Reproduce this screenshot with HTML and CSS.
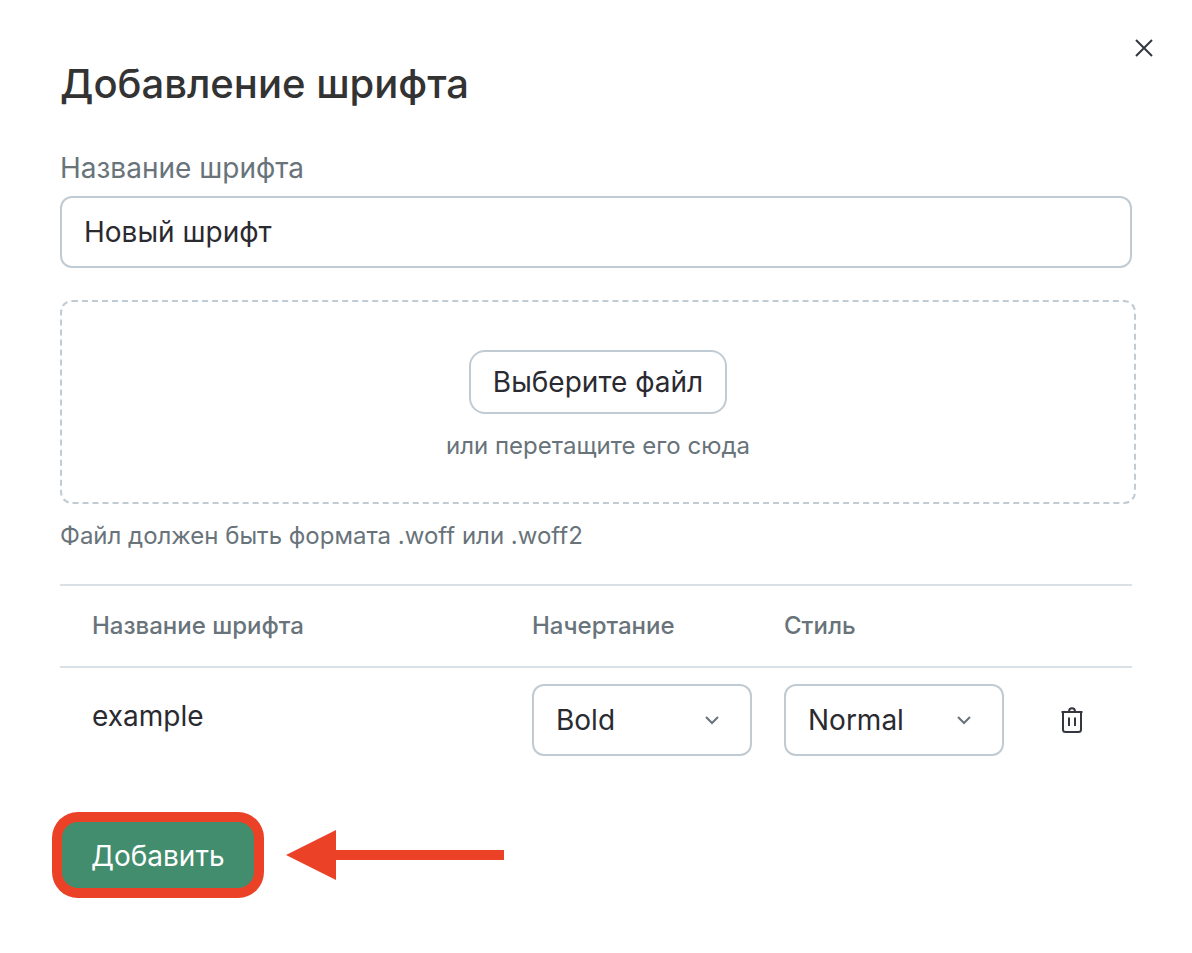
FILE: index.html
```
<!DOCTYPE html>
<html lang="ru">
<head>
    <meta charset="UTF-8">
    <meta name="viewport" content="width=device-width, initial-scale=1.0">
    <title>Добавление шрифта</title>
    <link rel="stylesheet" href="styles.css">
</head>
<body>
    <form class="modal">
        <button class="close" type="button" aria-label="Закрыть">
            <svg width="20" height="20" viewBox="0 0 20 20"><path d="M2 2l16 16M18 2L2 18"/></svg>
        </button>
        <h1 class="title">Добавление шрифта</h1>
        <label class="label" for="font-name">Название шрифта</label>
        <input class="input" id="font-name" type="text" value="Новый шрифт">

        <div class="dropzone">
            <button class="btn-file" type="button">Выберите файл</button>
            <span class="drop-text">или перетащите его сюда</span>
        </div>
        <p class="note">Файл должен быть формата .woff или .woff2</p>

        <table class="fonts">
            <thead>
                <tr>
                    <th class="col-name">Название шрифта</th>
                    <th class="col-select">Начертание</th>
                    <th class="col-select">Стиль</th>
                    <th class="col-del"></th>
                </tr>
            </thead>
            <tbody>
                <tr>
                    <td class="col-name">example</td>
                    <td class="col-select">
                        <div class="select">
                            <select aria-label="Начертание">
                                <option>Regular</option>
                                <option selected>Bold</option>
                            </select>
                            <svg width="16" height="16" viewBox="0 0 16 16"><path d="M2 5l6 6 6-6"/></svg>
                        </div>
                    </td>
                    <td class="col-select">
                        <div class="select">
                            <select aria-label="Стиль">
                                <option selected>Normal</option>
                                <option>Italic</option>
                            </select>
                            <svg width="16" height="16" viewBox="0 0 16 16"><path d="M2 5l6 6 6-6"/></svg>
                        </div>
                    </td>
                    <td class="col-del">
                        <button class="btn-del" type="button" aria-label="Удалить">
                            <svg width="24" height="28" viewBox="0 0 24 28"><path d="M1.5 6h21M3 6v17.500q0 2.500 2.500 2.500h13q2.500 0 2.500-2.500V6M9 5.500c0-4.500 6-4.500 6 0M9 11.500v8.500M15 11.500v8.500"/></svg>
                        </button>
                    </td>
                </tr>
            </tbody>
        </table>

        <div class="actions">
            <button class="btn-add" type="submit">Добавить</button>
            <svg class="arrow" width="218" height="50" viewBox="0 0 218 50"><path d="M0 25L50 0v20h168v10H50v20z"/></svg>
        </div>
    </form>
</body>
</html>
```
FILE: styles.css
```
*{
    margin: 0;
    padding: 0;
    box-sizing: border-box;
}
body{
    background: #ffffff;
    font-family: Inter, "Liberation Sans", sans-serif;
    font-size: 28px;
    line-height: 40px;
    color: #2a2a30;
}
button,input,select{
    font: inherit;
    color: inherit;
    background: none;
    border: none;
}
button,select{
    cursor: pointer;
}
svg{
    display: block;
    fill: none;
    stroke: #34373d;
    stroke-width: 2;
}
.modal{
    position: relative;
    padding: 60px;
}
.close{
    position: absolute;
    top: 28px;
    right: 28px;
    padding: 10px;
}
.title{
    font-size: 40px;
    line-height: 48px;
    font-weight: 500;
    color: #333333;
    margin-bottom: 40px;
}
.label{
    display: block;
    color: #68737a;
    margin-bottom: 8px;
}
.input{
    display: block;
    width: 100%;
    height: 72px;
    padding: 0 22px;
    border: 2px solid #c0cbd3;
    border-radius: 12px;
}
.dropzone{
    display: flex;
    flex-direction: column;
    align-items: center;
    gap: 16px;
    margin: 32px -4px 16px 0;
    padding: 48px 0 40px;
    border: 2px dashed #c0cbd3;
    border-radius: 12px;
}
.btn-file{
    height: 64px;
    padding: 0 22px;
    border: 2px solid #c0cbd3;
    border-radius: 16px;
}
.drop-text,.note{
    font-size: 24px;
    line-height: 32px;
    color: #68737a;
}
.note{
    margin-bottom: 32px;
}
.fonts{
    width: 100%;
    table-layout: fixed;
    border-collapse: separate;
    border-spacing: 0;
}
.fonts th{
    height: 84px;
    border-top: 2px solid #dae1e6;
    border-bottom: 2px solid #dae1e6;
    font-size: 24px;
    font-weight: 500;
    color: #68737a;
    text-align: left;
}
.fonts th,.fonts td{
    padding: 0 16px;
}
.fonts td{
    padding-top: 16px;
}
.fonts .col-name{
    padding-left: 32px;
}
.fonts td.col-name{
    padding-bottom: 8px;
}
.col-select{
    width: 252px;
}
.fonts .col-del{
    width: 112px;
    padding-left: 32px;
}
.select{
    position: relative;
}
.select select{
    display: block;
    width: 100%;
    height: 72px;
    padding: 0 22px;
    border: 2px solid #c0cbd3;
    border-radius: 12px;
    appearance: none;
}
.select svg{
    position: absolute;
    top: 28px;
    right: 32px;
    stroke: #68737a;
    pointer-events: none;
}
.btn-del{
    display: block;
    padding: 8px;
}
.actions{
    display: flex;
    align-items: center;
    gap: 32px;
    margin-top: 66px;
    padding-left: 2px;
}
.btn-add{
    height: 66px;
    padding: 2px 29px 0;
    background: #418d6d;
    color: #ffffff;
    border-radius: 16px;
    box-shadow: 0 0 0 10px #ea4127;
}
.arrow{
    fill: #ea4127;
    stroke: none;
}
```
